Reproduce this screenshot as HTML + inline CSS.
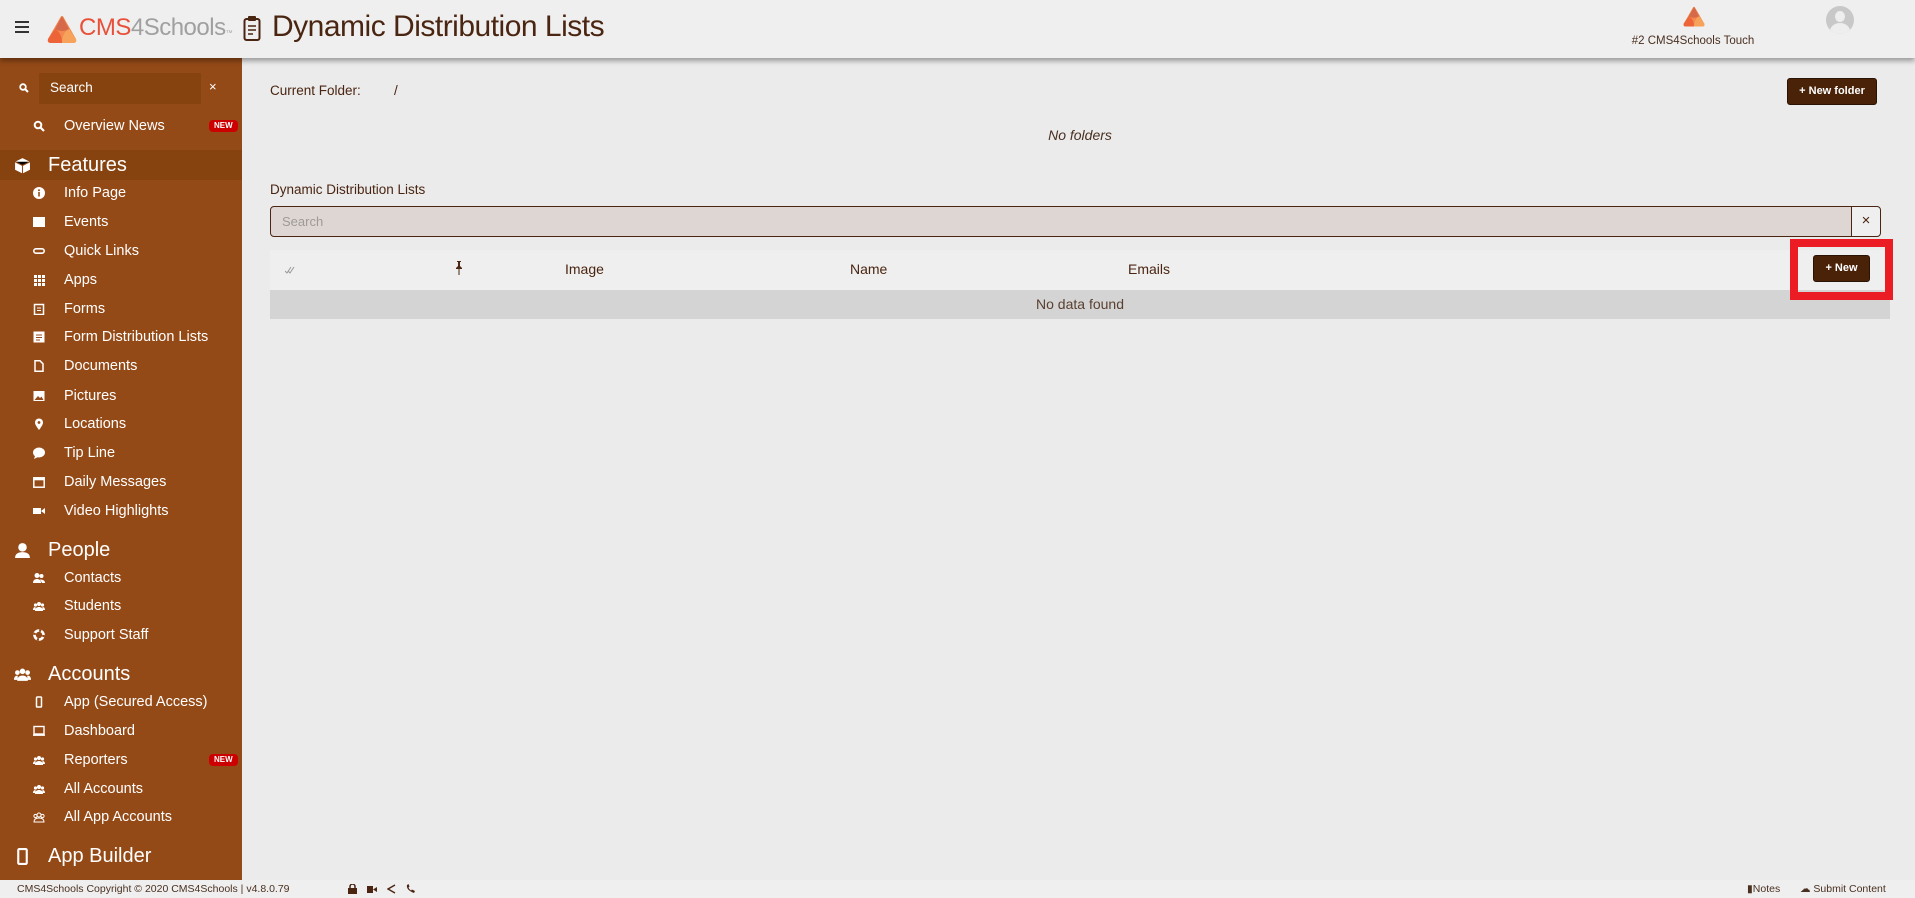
<!DOCTYPE html>
<html><head><meta charset="utf-8"><style>
*{box-sizing:border-box;margin:0;padding:0}
body{width:1915px;height:898px;overflow:hidden;font-family:"Liberation Sans",sans-serif;background:#ebebeb;position:relative;color:#4a2511}
.hdr{position:absolute;left:0;top:0;width:1915px;height:58px;background:#efefef;box-shadow:0 3px 5px rgba(0,0,0,.35);z-index:2}
.side{position:absolute;left:0;top:58px;width:242px;height:822px;background:#944a17;color:#fff}
.it{position:absolute;left:0;width:242px;font-size:14.5px;height:24px;line-height:24px}
.it .ic{position:absolute;left:33px;top:6px;width:12px;height:12px}
.it .t{position:absolute;left:64px}
.h{position:absolute;left:0;width:242px;font-size:20px;height:30px;line-height:30px}
.h .t{position:absolute;left:48px}
.h .ic{position:absolute;left:14px;top:7px;width:17px;height:17px}
.new{position:absolute;left:209px;top:6px;background:#c00;color:#fff;font-size:8px;font-weight:bold;padding:0 5px;height:12px;line-height:12px;border-radius:4px}
.foot{position:absolute;left:0;top:880px;width:1915px;height:18px;background:#efefef;font-size:10.5px;color:#4a3020;line-height:18px}
.btn{position:absolute;background:#4a2208;color:#fff;border:1px solid #2a1204;border-radius:3px;font-size:11px;font-weight:bold;text-align:center}
</style></head><body>
<div class="hdr">
 <div style="position:absolute;left:15px;top:21px;width:14px;height:2px;background:#333;box-shadow:0 5px 0 #333,0 10px 0 #333"></div>
 <svg style="position:absolute;left:46px;top:15px" width="32" height="30" viewBox="0 0 32 30"><path d="M16 1 Q17 1 18 3 L30 24 Q31 28 27 28 L5 28 Q1 28 2 24 L14 3 Q15 1 16 1Z" fill="#f4884e"/><path d="M16 1 L23 14 Q16 18 9 14Z" fill="#d6694a"/><path d="M9 14 Q16 18 16 28 L5 28 Q1 28 2 24Z" fill="#ec6438"/><path d="M23 14 L30 24 Q31 28 27 28 L16 28 Q16 18 23 14Z" fill="#f6a25a"/></svg>
 <div style="position:absolute;left:79px;top:14px;font-size:24px;letter-spacing:-0.5px"><span style="color:#e8503a">CMS</span><span style="color:#a0a0a0">4Schools</span><span style="color:#aaa;font-size:7px">™</span></div>
 <svg style="position:absolute;left:243px;top:15px" width="18" height="27" viewBox="0 0 18 27"><rect x="1.5" y="4" width="15" height="21" rx="2" fill="none" stroke="#4a2511" stroke-width="2"/><rect x="5" y="1" width="8" height="5" rx="1" fill="#4a2511"/><path d="M5 11h8M5 15h8M5 19h5" stroke="#4a2511" stroke-width="1.6"/></svg>
 <div style="position:absolute;left:272px;top:10px;font-size:30px;color:#4a2511;letter-spacing:-0.5px">Dynamic Distribution Lists</div>
 <svg style="position:absolute;left:1682px;top:6px" width="24" height="22" viewBox="0 0 32 30"><path d="M16 1 Q17 1 18 3 L30 24 Q31 28 27 28 L5 28 Q1 28 2 24 L14 3 Q15 1 16 1Z" fill="#f4884e"/><path d="M16 1 L23 14 Q16 18 9 14Z" fill="#d6694a"/><path d="M9 14 Q16 18 16 28 L5 28 Q1 28 2 24Z" fill="#ec6438"/><path d="M23 14 L30 24 Q31 28 27 28 L16 28 Q16 18 23 14Z" fill="#f6a25a"/></svg>
 <div style="position:absolute;left:1620px;top:35px;width:146px;text-align:center;font-size:11.5px;color:#4a3020">#2 CMS4Schools Touch</div>
 <div style="position:absolute;left:1826px;top:6px;width:28px;height:28px;border-radius:50%;background:#c8c8c8;overflow:hidden"><div style="position:absolute;left:9px;top:5px;width:10px;height:11px;border-radius:50%;background:#eee"></div><div style="position:absolute;left:4px;top:17px;width:20px;height:16px;border-radius:50%;background:#eee"></div></div>
</div>
<div class="side">
 <div style="position:absolute;left:39px;top:15px;width:162px;height:31px;background:#86420f"></div>
 <svg style="position:absolute;left:19px;top:25px" width="10" height="10" viewBox="0 0 10 10"><circle cx="4" cy="4" r="2.8" fill="none" stroke="#fff" stroke-width="1.8"/><path d="M6 6L9 9" stroke="#fff" stroke-width="2"/></svg>
 <div style="position:absolute;left:50px;top:22px;font-size:13.5px">Search</div>
 <div style="position:absolute;left:209px;top:21px;font-size:13px">×</div>
 <div class="it" style="top:56px"><svg class="ic" viewBox="0 0 12 12"><circle cx="5" cy="5" r="3.3" fill="none" stroke="#fff" stroke-width="2"/><path d="M7.5 7.5L11 11" stroke="#fff" stroke-width="2.2"/></svg><span class="t">Overview News</span><span class="new">NEW</span></div>
 <div class="h" style="top:92px;background:#86420f"><svg class="ic" viewBox="0 0 16 16"><path d="M8 1L15 4.5V12L8 15.5L1 12V4.5Z" fill="#fff"/><path d="M1 4.5L8 8L15 4.5M8 8V15.5" stroke="#944a17" stroke-width="1"/></svg><span class="t">Features</span></div>
 <div class="it" style="top:123px"><svg class="ic" viewBox="0 0 12 12"><circle cx="6" cy="6" r="6" fill="#fff"/><rect x="5.2" y="5" width="1.6" height="4.5" fill="#944a17"/><circle cx="6" cy="3.2" r="1" fill="#944a17"/></svg><span class="t">Info Page</span></div>
 <div class="it" style="top:152px"><svg class="ic" viewBox="0 0 12 12"><rect x="0" y="1" width="12" height="10" fill="#fff"/></svg><span class="t">Events</span></div>
 <div class="it" style="top:181px"><svg class="ic" viewBox="0 0 12 12"><rect x="0.8" y="3.8" width="10.4" height="4.4" rx="2.2" fill="none" stroke="#fff" stroke-width="1.6"/></svg><span class="t">Quick Links</span></div>
 <div class="it" style="top:210px"><svg class="ic" viewBox="0 0 12 12" fill="#fff"><rect x="1" y="1" width="3" height="3"/><rect x="5" y="1" width="3" height="3"/><rect x="9" y="1" width="3" height="3"/><rect x="1" y="5" width="3" height="3"/><rect x="5" y="5" width="3" height="3"/><rect x="9" y="5" width="3" height="3"/><rect x="1" y="9" width="3" height="3"/><rect x="5" y="9" width="3" height="3"/><rect x="9" y="9" width="3" height="3"/></svg><span class="t">Apps</span></div>
 <div class="it" style="top:239px"><svg class="ic" viewBox="0 0 12 12"><rect x="1.5" y="1.5" width="9" height="10" fill="none" stroke="#fff" stroke-width="1.5"/><path d="M4 5h4M4 7.5h4" stroke="#fff"/></svg><span class="t">Forms</span></div>
 <div class="it" style="top:267px"><svg class="ic" viewBox="0 0 12 12"><rect x="0.5" y="0.5" width="11" height="11" fill="#fff"/><path d="M3 4h6M3 6.5h6M3 9h4" stroke="#944a17"/></svg><span class="t">Form Distribution Lists</span></div>
 <div class="it" style="top:296px"><svg class="ic" viewBox="0 0 12 12"><path d="M2 0.8h5l3 3V11.2H2Z" fill="none" stroke="#fff" stroke-width="1.5"/></svg><span class="t">Documents</span></div>
 <div class="it" style="top:326px"><svg class="ic" viewBox="0 0 12 12"><rect x="0.5" y="1" width="11" height="10" fill="#fff"/><path d="M1.5 10L5 6l2 2 1.5-1.5L10.5 10Z" fill="#944a17"/></svg><span class="t">Pictures</span></div>
 <div class="it" style="top:354px"><svg class="ic" viewBox="0 0 12 12"><path d="M6 12C3 8 2 6 2 4.5A4 4 0 0 1 10 4.5C10 6 9 8 6 12Z" fill="#fff"/><circle cx="6" cy="4.5" r="1.4" fill="#944a17"/></svg><span class="t">Locations</span></div>
 <div class="it" style="top:383px"><svg class="ic" viewBox="0 0 12 12"><ellipse cx="6" cy="5.5" rx="6" ry="5" fill="#fff"/><path d="M2 9L1 12L5 10Z" fill="#fff"/></svg><span class="t">Tip Line</span></div>
 <div class="it" style="top:412px"><svg class="ic" viewBox="0 0 12 12"><rect x="0.8" y="1.8" width="10.4" height="9.4" fill="none" stroke="#fff" stroke-width="1.5"/><rect x="0.8" y="1.8" width="10.4" height="2.5" fill="#fff"/></svg><span class="t">Daily Messages</span></div>
 <div class="it" style="top:441px"><svg class="ic" viewBox="0 0 12 12" fill="#fff"><rect x="0" y="3" width="8" height="6"/><path d="M8 6L12 3V9Z"/></svg><span class="t">Video Highlights</span></div>
 <div class="h" style="top:477px"><svg class="ic" viewBox="0 0 16 16" fill="#fff"><circle cx="8" cy="5" r="4"/><path d="M1 15c0-4 3-5.5 7-5.5s7 1.5 7 5.5Z"/></svg><span class="t">People</span></div>
 <div class="it" style="top:508px"><svg class="ic" viewBox="0 0 12 12" fill="#fff"><circle cx="4" cy="3.5" r="2.5"/><circle cx="8.5" cy="4" r="2"/><path d="M0 11c0-3 2-4 4-4s4 1 4 4Z"/><path d="M7 7.5c3 0 5 1 5 3.5H9Z"/></svg><span class="t">Contacts</span></div>
 <div class="it" style="top:536px"><svg class="ic" viewBox="0 0 12 12" fill="#fff"><circle cx="6" cy="4" r="2"/><circle cx="2.5" cy="5" r="1.6"/><circle cx="9.5" cy="5" r="1.6"/><path d="M2 11c0-3 2-4 4-4s4 1 4 4Z"/><path d="M0 10c0-2 1-3 2.5-3v3Z M12 10c0-2-1-3-2.5-3v3Z"/></svg><span class="t">Students</span></div>
 <div class="it" style="top:565px"><svg class="ic" viewBox="0 0 12 12"><circle cx="6" cy="6" r="4.5" fill="none" stroke="#fff" stroke-width="2.6"/><circle cx="6" cy="6" r="4.5" fill="none" stroke="#944a17" stroke-width="2.6" stroke-dasharray="2 5.07"/></svg><span class="t">Support Staff</span></div>
 <div class="h" style="top:601px"><svg class="ic" viewBox="0 0 16 16" fill="#fff"><circle cx="8" cy="5" r="2.6"/><circle cx="3.2" cy="6.2" r="2.2"/><circle cx="12.8" cy="6.2" r="2.2"/><path d="M3 14c0-4 2.5-5 5-5s5 1 5 5Z"/><path d="M0 13c0-3 1.5-4 3.5-4v4Z M16 13c0-3-1.5-4-3.5-4v4Z"/></svg><span class="t">Accounts</span></div>
 <div class="it" style="top:632px"><svg class="ic" viewBox="0 0 12 12"><rect x="3.5" y="1" width="5" height="10" rx="0.8" fill="none" stroke="#fff" stroke-width="1.5"/></svg><span class="t">App (Secured Access)</span></div>
 <div class="it" style="top:661px"><svg class="ic" viewBox="0 0 12 12"><rect x="1" y="1.5" width="10" height="7.5" fill="none" stroke="#fff" stroke-width="1.4"/><rect x="0" y="9.5" width="12" height="1.4" fill="#fff"/></svg><span class="t">Dashboard</span></div>
 <div class="it" style="top:690px"><svg class="ic" viewBox="0 0 12 12" fill="#fff"><circle cx="6" cy="4" r="2"/><circle cx="2.5" cy="5" r="1.6"/><circle cx="9.5" cy="5" r="1.6"/><path d="M2 11c0-3 2-4 4-4s4 1 4 4Z"/><path d="M0 10c0-2 1-3 2.5-3v3Z M12 10c0-2-1-3-2.5-3v3Z"/></svg><span class="t">Reporters</span><span class="new">NEW</span></div>
 <div class="it" style="top:719px"><svg class="ic" viewBox="0 0 12 12" fill="#fff"><circle cx="6" cy="4" r="2"/><circle cx="2.5" cy="5" r="1.6"/><circle cx="9.5" cy="5" r="1.6"/><path d="M2 11c0-3 2-4 4-4s4 1 4 4Z"/><path d="M0 10c0-2 1-3 2.5-3v3Z M12 10c0-2-1-3-2.5-3v3Z"/></svg><span class="t">All Accounts</span></div>
 <div class="it" style="top:747px"><svg class="ic" viewBox="0 0 12 12" fill="none" stroke="#fff" stroke-width="1"><circle cx="6" cy="4" r="2"/><circle cx="2.5" cy="5" r="1.6"/><circle cx="9.5" cy="5" r="1.6"/><path d="M1 11c0-3 2-4 5-4s5 1 5 4Z"/></svg><span class="t">All App Accounts</span></div>
 <div class="h" style="top:783px"><svg class="ic" viewBox="0 0 16 16"><rect x="4" y="1" width="8" height="14" rx="1" fill="none" stroke="#fff" stroke-width="2"/></svg><span class="t">App Builder</span></div>
</div>
<div style="position:absolute;left:270px;top:83px;font-size:13.5px">Current Folder:</div>
<div style="position:absolute;left:394px;top:83px;font-size:13.5px">/</div>
<div class="btn" style="left:1787px;top:78px;width:90px;height:27px;line-height:25px">+ New folder</div>
<div style="position:absolute;left:980px;top:127px;width:200px;text-align:center;font-size:14px;font-style:italic;color:#4a3020">No folders</div>
<div style="position:absolute;left:270px;top:182px;font-size:13.5px">Dynamic Distribution Lists</div>
<div style="position:absolute;left:270px;top:206px;width:1582px;height:31px;background:#ddd6d2;border:1px solid #4a2511;border-radius:4px 0 0 4px;font-size:13px;color:#a09a96;padding:7px 11px">Search</div>
<div style="position:absolute;left:1851px;top:206px;width:30px;height:31px;background:#efefef;border:1px solid #4a2511;border-radius:0 4px 4px 0;text-align:center;line-height:28px;font-size:15px;color:#4a2511">×</div>
<div style="position:absolute;left:270px;top:250px;width:1620px;height:40px;background:#efefef;font-size:14px;color:#4a2511">
 <svg style="position:absolute;left:15px;top:16px" width="10" height="8" viewBox="0 0 10 8"><path d="M0 5l2 2 4-6M3 5l2 2 4-6" fill="none" stroke="#999" stroke-width="1"/></svg>
 <svg style="position:absolute;left:185px;top:11px" width="8" height="14" viewBox="0 0 8 14"><path d="M2 0h4v1H5v4l2 2v1H1V7l2-2V1H2Z" fill="#4a2511"/><path d="M4 8v6" stroke="#4a2511" stroke-width="1"/></svg>
 <span style="position:absolute;left:295px;top:11px">Image</span>
 <span style="position:absolute;left:580px;top:11px">Name</span>
 <span style="position:absolute;left:858px;top:11px">Emails</span>
</div>
<div style="position:absolute;left:270px;top:290px;width:1620px;height:29px;background:#d4d4d4;text-align:center;line-height:29px;font-size:14px;color:#5a4030">No data found</div>
<div style="position:absolute;left:1790px;top:239px;width:103px;height:61px;border:8px solid #ec1c24"></div>
<div class="btn" style="left:1813px;top:255px;width:57px;height:27px;line-height:25px">+ New</div>
<div class="foot">
 <span style="position:absolute;left:17px">CMS4Schools Copyright © 2020 CMS4Schools | v4.8.0.79</span>
 <svg style="position:absolute;left:348px;top:4px" width="9" height="10" viewBox="0 0 9 10"><rect x="0" y="4" width="9" height="6" fill="#4a2511"/><path d="M2 4V2.5a2.5 2.5 0 0 1 5 0V4" fill="none" stroke="#4a2511" stroke-width="1.5"/></svg>
 <svg style="position:absolute;left:367px;top:6px" width="10" height="7" viewBox="0 0 10 7"><rect x="0" y="0" width="6" height="7" fill="#4a2511"/><path d="M6 3.5L10 1V6Z" fill="#4a2511"/></svg>
 <svg style="position:absolute;left:387px;top:4px" width="9" height="10" viewBox="0 0 9 10"><path d="M8 1L1 5l7 4" fill="none" stroke="#4a2511" stroke-width="1.4"/></svg>
 <svg style="position:absolute;left:406px;top:4px" width="9" height="10" viewBox="0 0 9 10"><path d="M1 1Q0 6 8 9L9 7 6 5.5 5 6.5Q3 5 2.5 3.5L3.5 2.5 2.5 0Z" fill="#4a2511"/></svg>
 <span style="position:absolute;left:1747px">&#9646;Notes</span>
 <span style="position:absolute;left:1800px">&#9729; Submit Content</span>
</div>
</body></html>
